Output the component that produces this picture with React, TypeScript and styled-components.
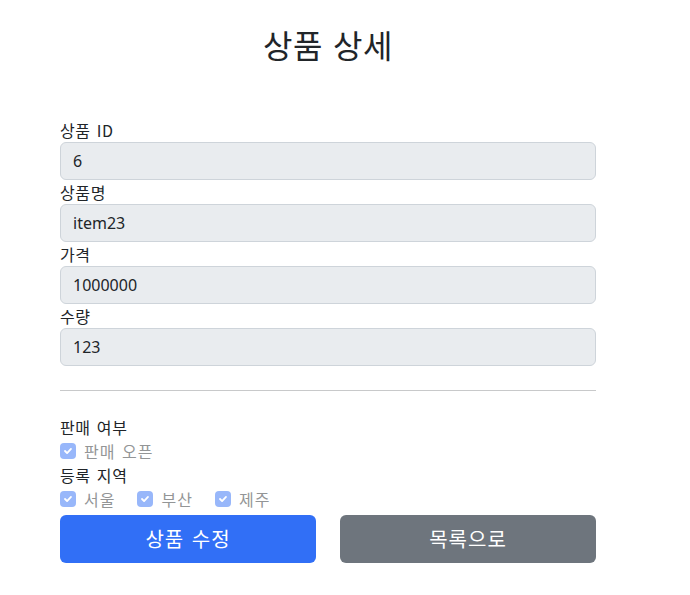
import React from "react";
import styled, { createGlobalStyle } from "styled-components";

const Global = createGlobalStyle`
  html, body { margin: 0; padding: 0; background: #fff; }
  body {
    font-family: "Noto Sans", "Noto Sans CJK KR", sans-serif;
    font-size: 16px;
    line-height: 24px;
    color: #212529;
  }
  * { box-sizing: border-box; }
`;

const Container = styled.div`
  width: 536px;
  margin-left: 60px;
  padding-top: 25px;
`;

const Title = styled.h2`
  margin: 0 0 54px;
  text-align: center;
  font-family: "Noto Sans CJK KR", sans-serif;
  font-weight: 400;
  font-size: 32px;
  line-height: 39px;
  letter-spacing: 0.6px;
  word-spacing: 2px;
`;

const Field = styled.div`
  display: flex;
  flex-direction: column;
`;

const Label = styled.label`
  font-family: "Noto Sans CJK KR", sans-serif;
  font-size: 16px;
  line-height: 24px;
  height: 24px;
  letter-spacing: 0.6px;
  word-spacing: 2px;
`;

const Input = styled.div`
  height: 38px;
  padding: 6px 12px;
  background: #e9ecef;
  border: 1px solid #ced4da;
  border-radius: 6px;
  font-size: 16px;
  line-height: 24px;
  color: #212529;
`;

const Divider = styled.hr`
  margin: 24px 0;
  border: 0;
  border-top: 1px solid #c8c9ca;
  height: 0;
`;

const Row = styled.div`
  display: flex;
  align-items: center;
  height: 24px;
`;

const CheckItem = styled.div<{ $last?: boolean }>`
  display: flex;
  align-items: center;
  margin-right: ${(p) => (p.$last ? 0 : 22)}px;
`;

const Box = styled.span`
  width: 16px;
  height: 16px;
  border-radius: 4px;
  background: #98b7fa;
  display: flex;
  align-items: center;
  justify-content: center;
  margin-right: 8px;
`;

const CheckText = styled.span`
  font-family: "Noto Sans CJK KR", sans-serif;
  color: #939596;
  letter-spacing: 1px;
  word-spacing: 2px;
`;

const Buttons = styled.div`
  display: grid;
  grid-template-columns: 1fr 1fr;
  gap: 24px;
  margin-top: 4px;
`;

const Button = styled.button<{ $variant: "primary" | "secondary" }>`
  height: 48px;
  border: 0;
  border-radius: 6px;
  color: #fff;
  font-family: "Noto Sans CJK KR", sans-serif;
  font-size: 20px;
  line-height: 30px;
  letter-spacing: 1px;
  word-spacing: 2px;
  background: ${(p) => (p.$variant === "primary" ? "#316ff6" : "#6e757d")};
  cursor: pointer;
`;

const Check = ({ label, last }: { label: string; last?: boolean }) => (
  <CheckItem $last={last}>
    <Box>
      <svg width="12" height="12" viewBox="0 0 20 20">
        <path d="m5 10 3.5 3.5 6.5-7" fill="none" stroke="#fff" strokeWidth="3" strokeLinecap="round" strokeLinejoin="round" />
      </svg>
    </Box>
    <CheckText>{label}</CheckText>
  </CheckItem>
);

const fields = [
  { label: "상품 ID", value: "6" },
  { label: "상품명", value: "item23" },
  { label: "가격", value: "1000000" },
  { label: "수량", value: "123" },
];

export default function App() {
  return (
    <>
      <Global />
      <Container>
        <Title>상품 상세</Title>
        {fields.map((f) => (
          <Field key={f.label}>
            <Label>{f.label}</Label>
            <Input>{f.value}</Input>
          </Field>
        ))}
        <Divider />
        <Label as="div">판매 여부</Label>
        <Row>
          <Check label="판매 오픈" last />
        </Row>
        <Label as="div">등록 지역</Label>
        <Row>
          <Check label="서울" />
          <Check label="부산" />
          <Check label="제주" last />
        </Row>
        <Buttons>
          <Button $variant="primary">상품 수정</Button>
          <Button $variant="secondary">목록으로</Button>
        </Buttons>
      </Container>
    </>
  );
}
